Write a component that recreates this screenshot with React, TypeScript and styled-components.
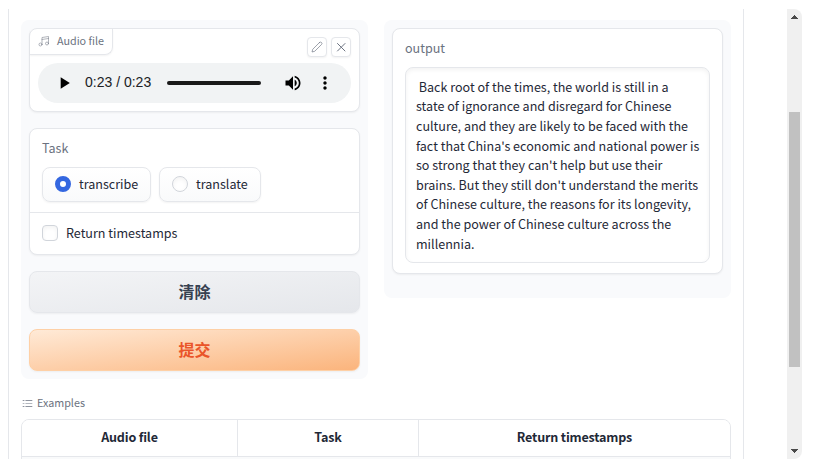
import React from 'react';
import styled, { createGlobalStyle, css } from 'styled-components';

const Global = createGlobalStyle`
  *, *::before, *::after { box-sizing: border-box; }
  body {
    margin: 0;
    background: #fff;
    color: #1f2937;
    font-family: "Noto Sans CJK SC", "Open Sans", sans-serif;
    font-size: 12.56px;
    line-height: 20px;
  }
`;

const Viewport = styled.div`
  display: flex;
  justify-content: space-between;
  width: 794px;
  height: 450px;
  margin: 9px 0 0 8px;
  overflow: hidden;
`;

const Page = styled.main`
  width: 736px;
  padding: 11px 12px 0;
  border: solid #e5e7eb;
  border-width: 0 1px;
`;

const Columns = styled.div`
  display: flex;
  align-items: flex-start;
  gap: 16px;
`;

const Column = styled.section<{ $height: number }>`
  display: flex;
  flex-direction: column;
  gap: 16px;
  width: 347px;
  height: ${p => p.$height}px;
  padding: 8px;
  border-radius: 8px;
  background: #f9fafc;
`;

const Card = styled.div<{ $height: number }>`
  flex: none;
  height: ${p => p.$height}px;
  border: 1px solid #e5e7eb;
  border-radius: 8px;
  background: #fff;
  box-shadow: 0 1px 2px rgba(0, 0, 0, 0.05);
`;

const CardHeader = styled.div`
  display: flex;
  justify-content: space-between;
  height: 34px;
  padding-right: 8px;
`;

const CardLabel = styled.div`
  display: flex;
  align-items: center;
  gap: 7px;
  width: 83px;
  height: 26px;
  padding: 0 0 2px 8px;
  border: solid #e5e7eb;
  border-width: 0 1px 1px 0;
  border-radius: 0 0 8px 0;
  box-shadow: 0 1px 2px rgba(0, 0, 0, 0.05);
  color: #6b7280;
  font-size: 10.75px;
  white-space: nowrap;
`;

const CardTools = styled.div`
  display: flex;
  gap: 4px;
  padding-top: 8px;
`;

const ToolButton = styled.button`
  display: grid;
  place-items: center;
  width: 20px;
  height: 20px;
  padding: 0;
  border: 1px solid #e5e7eb;
  border-radius: 4px;
  background: #fff;
  color: #6b7280;
  box-shadow: 0 1px 2px rgba(0, 0, 0, 0.05);
`;

const Player = styled.div`
  display: flex;
  align-items: center;
  width: 313px;
  height: 40px;
  margin-left: 8px;
  padding-left: 16px;
  border-radius: 20px;
  background: #f1f3f4;
  color: #000;
`;

const PlayerTime = styled.span`
  width: 82px;
  margin-left: 11px;
  padding-bottom: 2px;
  color: #202124;
  font: 14px/20px "Liberation Sans", sans-serif;
  white-space: nowrap;
`;

const PlayerTrack = styled.div`
  width: 94px;
  height: 4px;
  margin-right: 22px;
  border-radius: 2px;
  background: #191919;
`;

const PlayerIcon = styled.svg`
  flex: none;
  width: 20px;
  height: 20px;
  fill: currentColor;
  & + & { margin-left: 12px; }
`;

const FieldLabel = styled.div`
  height: 20px;
  color: #6b7280;
`;

const TaskField = styled.div`
  height: 84px;
  padding: 9px 12px 0;
  border-bottom: 1px solid #e5e7eb;
`;

const Options = styled.div`
  display: flex;
  gap: 8px;
  margin-top: 9px;
`;

const Option = styled.div<{ $width: number }>`
  display: flex;
  align-items: center;
  gap: 8px;
  width: ${p => p.$width}px;
  height: 35px;
  padding: 0 0 1px 12px;
  border: 1px solid #e5e7eb;
  border-radius: 8px;
  background: linear-gradient(to bottom, #fff, #f9fafb);
  box-shadow: 0 1px 2px rgba(0, 0, 0, 0.05);
`;

const tick = css`
  flex: none;
  width: 16px;
  height: 16px;
  border: 1px solid #d1d5db;
  background: #fff;
  box-shadow: inset 0 2px 4px rgba(0, 0, 0, 0.05);
`;

const Radio = styled.span<{ $on?: boolean }>`
  ${tick}
  border-radius: 50%;
  ${p => p.$on && css`
    border: 5px solid #3467e0;
    box-shadow: none;
  `}
`;

const Checkbox = styled.span`
  ${tick}
  border-radius: 4px;
`;

const CheckField = styled.div`
  display: flex;
  align-items: center;
  gap: 8px;
  height: 41px;
  padding: 0 0 1px 12px;
`;

const Action = styled.button<{ $primary?: boolean }>`
  flex: none;
  height: 42px;
  padding: 0 0 3px;
  border: 1px solid ${p => (p.$primary ? '#fed0a6' : '#e5e7eb')};
  border-radius: 8px;
  background: ${p => (p.$primary
    ? 'linear-gradient(to bottom right, #ffead7, #fbb47c)'
    : 'linear-gradient(to bottom right, #f3f4f6, #e5e7eb)')};
  box-shadow: 0 1px 2px rgba(0, 0, 0, 0.05);
  color: ${p => (p.$primary ? '#ea5529' : '#374151')};
  font: 700 16px/24px "Noto Sans CJK SC", sans-serif;
`;

const OutputCard = styled(Card)`
  padding: 9px 12px 0;
`;

const OutputText = styled.div`
  height: 196px;
  margin-top: 9px;
  padding: 8.8px 0 0 10px;
  border: 1px solid #e5e7eb;
  border-radius: 8px;
  box-shadow: inset 0 2px 4px rgba(0, 0, 0, 0.05);
  line-height: 19.6px;
  white-space: pre;
`;

const ExamplesLabel = styled.div`
  display: flex;
  align-items: center;
  gap: 4px;
  height: 20px;
  margin-top: 14px;
  padding-left: 1px;
  color: #6b7280;
  font-size: 10.75px;
`;

const ExamplesTable = styled.div`
  height: 80px;
  margin-top: 6px;
  border: 1px solid #e5e7eb;
  border-radius: 8px;
  overflow: hidden;
`;

const TableRow = styled.div<{ $head?: boolean }>`
  display: grid;
  grid-template-columns: 215px 181px 1fr;
  height: 37px;
  border-bottom: 1px solid #e5e7eb;
  background: ${p => (p.$head ? '#fff' : '#f9fafb')};
`;

const TableCell = styled.div`
  padding-top: 7px;
  font-weight: 700;
  letter-spacing: -0.18px;
  text-align: center;
  & + & { border-left: 1px solid #e5e7eb; }
`;

const Scrollbar = styled.div`
  display: flex;
  flex-direction: column;
  align-items: center;
  width: 15px;
  height: 450px;
  border-radius: 0 8px 8px 0;
  background: #f0f0f0;
`;

const Thumb = styled.div`
  width: 11px;
  height: 255px;
  margin: 88px 0 77px;
  background: #c1c1c1;
`;

const outputLines = [
  ' Back root of the times, the world is still in a',
  'state of ignorance and disregard for Chinese',
  'culture, and they are likely to be faced with the',
  "fact that China's economic and national power is",
  "so strong that they can't help but use their",
  "brains. But they still don't understand the merits",
  'of Chinese culture, the reasons for its longevity,',
  'and the power of Chinese culture across the',
  'millennia.',
];

const NoteIcon = () => (
  <svg width="12" height="12" viewBox="0 0 24 24" fill="none" stroke="#7d838f" strokeWidth="1.2" strokeLinecap="round" strokeLinejoin="round">
    <path d="M8 19V5l13-2v14M8 9l13-2" />
    <circle cx="5" cy="19" r="3" />
    <circle cx="18" cy="17" r="3" />
  </svg>
);

const PencilIcon = () => (
  <svg width="12" height="12" viewBox="0 0 24 24" fill="none" stroke="currentColor" strokeWidth="1.3" strokeLinecap="round" strokeLinejoin="round">
    <path d="M17 3a2.828 2.828 0 1 1 4 4L7.500 20.500 2 22l1.500-5.500L17 3z" />
  </svg>
);

const CloseIcon = () => (
  <svg width="12" height="12" viewBox="0 0 24 24" fill="none" stroke="currentColor" strokeWidth="2" strokeLinecap="round">
    <path d="M5 5l15 15M20 5L5 20" />
  </svg>
);

const ListIcon = () => (
  <svg width="11" height="11" viewBox="0 0 32 32" fill="currentColor">
    <path d="M10 6h20v2H10zm0 18h20v2H10zm0-9h20v2H10zm-8 0h5v2H2zm0-9h5v2H2zm0 18h5v2H2z" />
  </svg>
);

const Arrow = ({ down }: { down?: boolean }) => (
  <svg width="15" height="15" viewBox="0 0 15 15" fill="#4a4a4a" shapeRendering="crispEdges">
    <path d={down ? 'M4 5h7v1h-1v1H9v1H8v1H7V8H6V7H5V6H4z' : 'M7 6h1v1h1v1h1v1h1v1H4V9h1V8h1V7h1z'} />
  </svg>
);

export default function App() {
  return (
    <>
      <Global />
      <Viewport>
        <Page>
          <Columns>
            <Column $height={359}>
              <Card $height={84}>
                <CardHeader>
                  <CardLabel><NoteIcon />Audio file</CardLabel>
                  <CardTools>
                    <ToolButton aria-label="Edit"><PencilIcon /></ToolButton>
                    <ToolButton aria-label="Clear"><CloseIcon /></ToolButton>
                  </CardTools>
                </CardHeader>
                <Player>
                  <PlayerIcon viewBox="0 0 24 24"><path d="M8 5v14l11-7z" /></PlayerIcon>
                  <PlayerTime>0:23 / 0:23</PlayerTime>
                  <PlayerTrack />
                  <PlayerIcon viewBox="0 0 24 24">
                    <path d="M3 9v6h4l5 5V4L7 9H3zm13.500 3c0-1.770-1.020-3.290-2.500-4.030v8.050c1.480-.730 2.500-2.250 2.500-4.020zM14 3.230v2.060c2.890.860 5 3.540 5 6.710s-2.110 5.850-5 6.710v2.060c4.010-.910 7-4.490 7-8.770s-2.990-7.860-7-8.770z" />
                  </PlayerIcon>
                  <PlayerIcon viewBox="0 0 24 24">
                    <path d="M12 8c1.100 0 2-.900 2-2s-.900-2-2-2-2 .900-2 2 .900 2 2 2zm0 2c-1.100 0-2 .900-2 2s.900 2 2 2 2-.900 2-2-.900-2-2-2zm0 6c-1.100 0-2 .900-2 2s.900 2 2 2 2-.900 2-2-.900-2-2-2z" />
                  </PlayerIcon>
                </Player>
              </Card>
              <Card $height={127}>
                <TaskField>
                  <FieldLabel>Task</FieldLabel>
                  <Options>
                    <Option $width={109}><Radio $on />transcribe</Option>
                    <Option $width={102}><Radio />translate</Option>
                  </Options>
                </TaskField>
                <CheckField><Checkbox />Return timestamps</CheckField>
              </Card>
              <Action>清除</Action>
              <Action $primary>提交</Action>
            </Column>
            <Column $height={278}>
              <OutputCard $height={246}>
                <FieldLabel>output</FieldLabel>
                <OutputText>{outputLines.join('\n')}</OutputText>
              </OutputCard>
            </Column>
          </Columns>
          <ExamplesLabel><ListIcon />Examples</ExamplesLabel>
          <ExamplesTable>
            <TableRow $head>
              <TableCell>Audio file</TableCell>
              <TableCell>Task</TableCell>
              <TableCell>Return timestamps</TableCell>
            </TableRow>
            <TableRow />
          </ExamplesTable>
        </Page>
        <Scrollbar>
          <Arrow />
          <Thumb />
          <Arrow down />
        </Scrollbar>
      </Viewport>
    </>
  );
}
